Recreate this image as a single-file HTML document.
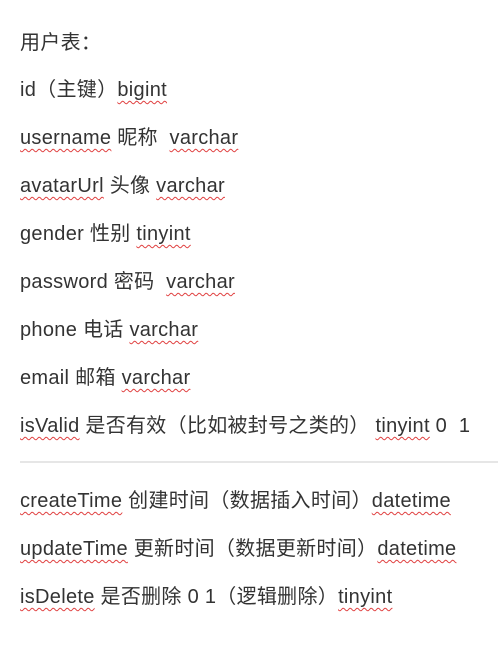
<!DOCTYPE html>
<html><head><meta charset="utf-8"><style>
html,body{margin:0;padding:0;background:#fff;width:498px;height:650px;overflow:hidden}
.l{position:absolute;left:20px;height:24px;line-height:24px;font-size:20px;letter-spacing:0.3px;color:#333;white-space:pre;font-family:"Liberation Sans","Noto Sans CJK SC",sans-serif}
u{text-decoration:underline wavy #e04040;text-decoration-thickness:1px;text-underline-offset:4px}
.hr{position:absolute;left:20px;right:0;top:461px;height:2px;background:#e6e6e6}
</style></head><body>
<div class="l" style="top:31px">用户表：</div>
<div class="l" style="top:78px">id（主键）<u>bigint</u></div>
<div class="l" style="top:126px"><u>username</u> 昵称  <u>varchar</u></div>
<div class="l" style="top:174px"><u>avatarUrl</u> 头像 <u>varchar</u></div>
<div class="l" style="top:222px">gender 性别 <u>tinyint</u></div>
<div class="l" style="top:270px">password 密码  <u>varchar</u></div>
<div class="l" style="top:318px">phone 电话 <u>varchar</u></div>
<div class="l" style="top:366px">email 邮箱 <u>varchar</u></div>
<div class="l" style="top:414px"><u>isValid</u> 是否有效（比如被封号之类的） <u>tinyint</u> 0  1</div>
<div class="hr"></div>
<div class="l" style="top:489px"><u>createTime</u> 创建时间（数据插入时间）<u>datetime</u></div>
<div class="l" style="top:537px"><u>updateTime</u> 更新时间（数据更新时间）<u>datetime</u></div>
<div class="l" style="top:585px"><u>isDelete</u> 是否删除 0 1（逻辑删除）<u>tinyint</u></div>
</body></html>
